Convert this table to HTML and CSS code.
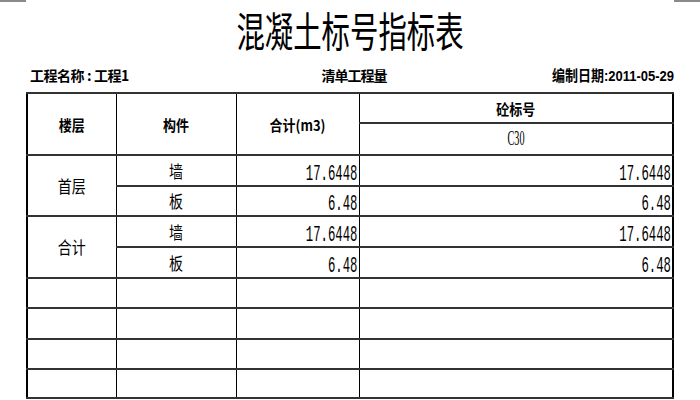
FILE: index.html
```html
<!DOCTYPE html>
<html lang="zh">
<head>
<meta charset="utf-8">
<title>混凝土标号指标表</title>
<link rel="stylesheet" href="styles.css">
</head>
<body>
<div class="topbar"><span class="corner"></span><span class="corner"></span></div>
<div class="page">
  <h1 class="title"><span class="title-text">混凝土标号指标表</span></h1>
  <div class="meta">
    <span class="meta-left">工程名称<span class="colon">:</span>工程1</span>
    <span class="meta-center">清单工程量</span>
    <span class="meta-right"><span class="date-text">编制日期:2011-05-29</span></span>
  </div>
  <table class="grid">
    <colgroup>
      <col class="c1"><col class="c2"><col class="c3"><col class="c4">
    </colgroup>
    <thead>
      <tr class="h1">
        <th rowspan="2"><span class="hx">楼层</span></th>
        <th rowspan="2"><span class="hx">构件</span></th>
        <th rowspan="2"><span class="hx">合计(m3)</span></th>
        <th><span class="hx">砼标号</span></th>
      </tr>
      <tr class="h2">
        <td class="grade"><span class="gx">C30</span></td>
      </tr>
    </thead>
    <tbody>
      <tr class="r1">
        <td rowspan="2" class="floor"><span class="cx">首层</span></td>
        <td class="part"><span class="cx">墙</span></td>
        <td class="num"><span class="nx">17.6448</span></td>
        <td class="num"><span class="nx">17.6448</span></td>
      </tr>
      <tr class="r2">
        <td class="part"><span class="cx">板</span></td>
        <td class="num"><span class="nx">6.48</span></td>
        <td class="num"><span class="nx">6.48</span></td>
      </tr>
      <tr class="r3">
        <td rowspan="2" class="floor"><span class="cx">合计</span></td>
        <td class="part"><span class="cx">墙</span></td>
        <td class="num"><span class="nx">17.6448</span></td>
        <td class="num"><span class="nx">17.6448</span></td>
      </tr>
      <tr class="r4">
        <td class="part"><span class="cx">板</span></td>
        <td class="num"><span class="nx">6.48</span></td>
        <td class="num"><span class="nx">6.48</span></td>
      </tr>
      <tr class="r5"><td></td><td></td><td></td><td></td></tr>
      <tr class="r6"><td></td><td></td><td></td><td></td></tr>
      <tr class="r7"><td></td><td></td><td></td><td></td></tr>
      <tr class="r8"><td></td><td></td><td></td><td></td></tr>
    </tbody>
  </table>
</div>
</body>
</html>
```

FILE: styles.css
```css
html, body {
  margin: 0;
  padding: 0;
  background: #ffffff;
  color: #000000;
  font-family: "Noto Sans CJK SC", "Liberation Sans", sans-serif;
}

.topbar {
  display: flex;
  justify-content: space-between;
  height: 2px;
}

.corner {
  width: 26px;
  height: 2px;
  background: #8a8a8a;
}

.page {
  padding: 0 26px;
}

.title {
  margin: 0;
  height: 56px;
  line-height: 56px;
  text-align: center;
  font-size: 40px;
  font-weight: 400;
  white-space: nowrap;
}

.title-text {
  display: inline-block;
  transform: scale(0.71, 1.02);
  transform-origin: center;
}

.meta {
  display: grid;
  grid-template-columns: 1fr auto 1fr;
  align-items: center;
  margin-top: 6px;
  height: 20px;
  font-size: 14px;
  font-weight: 700;
  line-height: 20px;
  white-space: nowrap;
}

.meta-left {
  padding-left: 4px;
  letter-spacing: -0.5px;
}

.colon {
  display: inline-block;
  padding: 0 3px;
}

.meta-center {
  padding-left: 8px;
  letter-spacing: -1px;
}

.meta-right {
  text-align: right;
}

.date-text {
  display: inline-block;
  font-family: "Liberation Sans", "Noto Sans CJK SC", sans-serif;
  font-size: 13px;
  transform: scaleY(1.15);
  transform-origin: right center;
}

.grid {
  margin-top: 8px;
  width: 648px;
  border-collapse: collapse;
  table-layout: fixed;
  border: 2px solid #000;
}

.c1 { width: 89px; }
.c2 { width: 120px; }
.c3 { width: 123px; }

.grid th,
.grid td {
  padding: 0;
  border-left: 1px solid #000;
  border-right: 1px solid #000;
  border-top: 2px solid #333;
  border-bottom: 2px solid #333;
  text-align: center;
  vertical-align: middle;
  white-space: nowrap;
}

.grid th {
  font-size: 13px;
  font-weight: 700;
}

.h1 { height: 30px; }
.h2 { height: 32px; }
.r1 { height: 31px; }
.r2 { height: 30px; }
.r3 { height: 31px; }
.r4 { height: 31px; }
.r5 { height: 30px; }
.r6 { height: 31px; }
.r7 { height: 30px; }
.r8 { height: 29px; }

.hx {
  display: inline-block;
  transform: scaleY(1.12);
}

.grade {
  font-family: "Liberation Serif", serif;
  font-size: 12px;
}

.gx {
  display: inline-block;
  transform: scale(0.85, 1.7);
}

.floor,
.part {
  font-size: 14px;
}

.cx {
  display: inline-block;
  transform: scaleY(1.22);
}

.grid td.num {
  text-align: right;
  padding-right: 1px;
}

.nx {
  display: inline-block;
  font-family: "Liberation Mono", monospace;
  font-size: 12.3px;
  transform: scaleY(1.8);
  transform-origin: right center;
}
```
